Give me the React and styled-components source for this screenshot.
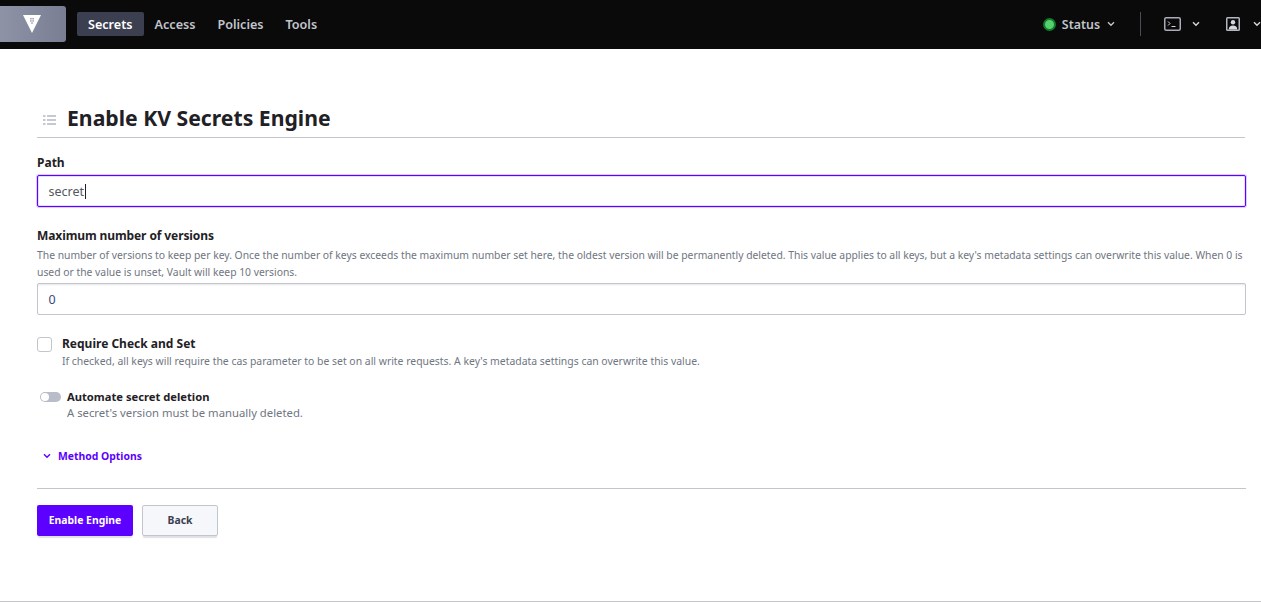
import React from 'react';
import styled, { createGlobalStyle } from 'styled-components';

const GlobalStyle = createGlobalStyle`
  html, body {
    margin: 0;
    padding: 0;
    background: #fff;
    overflow: hidden;
    font-family: "Noto Sans", "Open Sans", sans-serif;
  }
  * { box-sizing: border-box; }
`;

const App = () => {
  return (
    <Page>
      <GlobalStyle />
      <NavBar>
        <NavLeft>
          <Logo>
            <svg width="20" height="18" viewBox="0 0 20 18">
              <path d="M1 0h18L10 18z" fill="#fff" />
              <g fill="#8a8fa3">
                <rect x="8.2" y="3" width="1.4" height="1.4" />
                <rect x="10.4" y="3" width="1.4" height="1.4" />
                <rect x="8.2" y="5.2" width="1.4" height="1.4" />
                <rect x="10.4" y="5.2" width="1.4" height="1.4" />
                <rect x="9.3" y="7.4" width="1.4" height="1.4" />
              </g>
            </svg>
          </Logo>
          <NavLinks>
            <NavLink $active>Secrets</NavLink>
            <NavLink>Access</NavLink>
            <NavLink>Policies</NavLink>
            <NavLink>Tools</NavLink>
          </NavLinks>
        </NavLeft>
        <NavRight>
          <StatusDot />
          <StatusText>Status</StatusText>
          <Chevron color="#c2c5cb" />
          <Divider />
          <ConsoleIcon>
            <svg width="17" height="14" viewBox="0 0 17 14" fill="none">
              <rect x="0.75" y="0.75" width="15.5" height="12.5" rx="1.5" stroke="#a9adb8" strokeWidth="1.5" />
              <path d="M4 4.5L6 6.5L4 8.5" stroke="#d5d7dc" strokeWidth="1" />
              <path d="M7.5 9.5H11.5" stroke="#d5d7dc" strokeWidth="1" />
            </svg>
          </ConsoleIcon>
          <Chevron color="#d5d7dc" />
          <UserIcon>
            <svg width="14" height="14" viewBox="0 0 14 14">
              <rect width="14" height="14" rx="1.5" fill="#b4b7c2" />
              <rect x="1.5" y="1.5" width="11" height="11" fill="#0a0a0a" />
              <circle cx="7" cy="5.2" r="2.2" fill="#d5d7dc" />
              <path d="M2.8 12.5c0-3 1.6-4 4.2-4s4.2 1 4.2 4z" fill="#d5d7dc" />
            </svg>
          </UserIcon>
          <Chevron color="#d5d7dc" />
        </NavRight>
      </NavBar>

      <Content>
        <Header>
          <ListIcon>
            <svg width="13" height="10" viewBox="0 0 13 10" fill="#c6c8d3">
              <rect x="0" y="0" width="2.5" height="2" />
              <rect x="4" y="0" width="9" height="2" />
              <rect x="0" y="4" width="2.5" height="2" />
              <rect x="4" y="4" width="9" height="2" />
              <rect x="0" y="8" width="2.5" height="2" />
              <rect x="4" y="8" width="9" height="2" />
            </svg>
          </ListIcon>
          <Title>Enable KV Secrets Engine</Title>
        </Header>

        <Field $top={16}>
          <Label>Path</Label>
          <InputBox $focused>
            secret<Caret />
          </InputBox>
        </Field>

        <Field $top={20}>
          <Label $tight>Maximum number of versions</Label>
          <Help $size={10.35} $top={2}>
            The number of versions to keep per key. Once the number of keys exceeds the maximum number set here, the oldest version will be permanently deleted. This value applies to all keys, but a key's metadata settings can overwrite this value. When 0 is used or the value is unset, Vault will keep 10 versions.
          </Help>
          <InputBox $value>0</InputBox>
        </Field>

        <CheckRow>
          <CheckBox />
          <div>
            <Label>Require Check and Set</Label>
            <Help $size={10.42} $top={0}>If checked, all keys will require the cas parameter to be set on all write requests. A key's metadata settings can overwrite this value.</Help>
          </div>
        </CheckRow>

        <ToggleRow>
          <Toggle />
          <div>
            <SmallLabel>Automate secret deletion</SmallLabel>
            <ToggleHelp>A secret's version must be manually deleted.</ToggleHelp>
          </div>
        </ToggleRow>

        <MethodOptions>
          <Chevron color="#5c00ff" />
          Method Options
        </MethodOptions>

        <Footer>
          <PrimaryButton>Enable Engine</PrimaryButton>
          <SecondaryButton>Back</SecondaryButton>
        </Footer>
      </Content>
      <BottomRule />
    </Page>
  );
};

const Chevron = ({ color }) => (
  <ChevronSvg width="8" height="6" viewBox="0 0 8 6" fill="none">
    <path d="M1 1.2L4 4.2L7 1.2" stroke={color} strokeWidth="1.4" />
  </ChevronSvg>
);

// Styled components
const Page = styled.div`
  position: relative;
  height: 605px;
  width: 1261px;
  overflow: hidden;
  color: #1f2126;
`;

const NavBar = styled.div`
  display: flex;
  justify-content: space-between;
  align-items: center;
  height: 49px;
  padding-bottom: 1px;
  background: #0a0a0b;
`;

const NavLeft = styled.div`
  display: flex;
  align-items: center;
`;

const Logo = styled.div`
  display: flex;
  align-items: center;
  justify-content: flex-end;
  width: 66px;
  height: 36px;
  padding-right: 24px;
  background: linear-gradient(90deg, #8f93a6, #7a7e93);
  border-radius: 0 3px 3px 0;
`;

const NavLinks = styled.div`
  display: flex;
  align-items: center;
  margin-left: 11px;
`;

const NavLink = styled.div`
  height: 24px;
  padding: 1px 11px 0;
  line-height: 24px;
  border-radius: 2px;
  font-size: 12.6px;
  font-weight: 600;
  color: ${(p) => (p.$active ? '#ffffff' : '#c2c5cb')};
  background: ${(p) => (p.$active ? '#3b3f4f' : 'transparent')};
`;

const NavRight = styled.div`
  display: flex;
  align-items: center;
`;

const StatusDot = styled.div`
  width: 13px;
  height: 13px;
  border-radius: 50%;
  background: #56d06e;
  border: 2px solid #0f7a2a;
`;

const StatusText = styled.div`
  margin-left: 6px;
  font-size: 12.4px;
  font-weight: 600;
  color: #c2c5cb;
`;

const ChevronSvg = styled.svg`
  flex: none;
  margin-left: 7px;
`;

const Divider = styled.div`
  width: 1px;
  height: 24px;
  margin: 0 23px 0 25px;
  background: #4a4d59;
`;

const ConsoleIcon = styled.div`
  display: flex;
  margin-right: 4px;
`;

const UserIcon = styled.div`
  display: flex;
  margin-left: 26px;
  margin-right: 6px;
`;

const Content = styled.div`
  padding: 51px 15px 0 37px;
`;

const Header = styled.div`
  display: flex;
  align-items: center;
  height: 38px;
  padding-bottom: 2px;
  margin-right: 1px;
  border-bottom: 1px solid #c2c5cb;
`;

const ListIcon = styled.div`
  display: flex;
  margin: 4px 11px 0 6px;
`;

const Title = styled.h1`
  margin: 0;
  font-size: 21.2px;
  font-weight: 700;
  color: #1f2126;
`;

const Field = styled.div`
  margin-top: ${(p) => p.$top}px;
`;

const Label = styled.div`
  font-size: 12px;
  line-height: 18px;
  font-weight: 700;
  letter-spacing: ${(p) => (p.$tight ? '-0.1px' : '0')};
  color: #1f2126;
`;

const Help = styled.div`
  margin-top: ${(p) => p.$top}px;
  font-size: ${(p) => p.$size}px;
  line-height: 17px;
  color: #6f7682;
`;

const InputBox = styled.div`
  display: flex;
  align-items: center;
  height: 32px;
  margin-top: ${(p) => (p.$focused ? '3px' : '2px')};
  padding: 0 10.5px;
  font-size: 12.5px;
  background: #fff;
  border-radius: 2px;
  color: ${(p) => (p.$value ? '#3c4a7a' : '#525761')};
  border: 1px solid ${(p) => (p.$focused ? '#5c00ff' : '#c2c5cb')};
  box-shadow: ${(p) => (p.$focused ? '0 0 0 1px #d9ceff, inset 0 0 0 1px #5c00ff22' : 'inset 0 2px 2px -1px #e6e7ea')};
`;

const Caret = styled.span`
  display: inline-block;
  width: 1px;
  height: 15px;
  margin-left: 1px;
  background: #1f2126;
`;

const CheckRow = styled.div`
  display: flex;
  margin-top: 20px;
`;

const CheckBox = styled.div`
  flex: none;
  width: 15px;
  height: 15px;
  margin: 2px 10px 0 0;
  border: 1px solid #c2c5cb;
  border-radius: 3px;
`;

const ToggleRow = styled.div`
  display: flex;
  margin-top: 19px;
  padding-left: 3px;
`;

const Toggle = styled.div`
  position: relative;
  flex: none;
  width: 21px;
  height: 10px;
  margin: 3px 6px 0 0;
  background: #b9bcc9;
  border-radius: 5px;
  &::after {
    content: '';
    position: absolute;
    left: 1px;
    top: 1px;
    width: 8px;
    height: 8px;
    border-radius: 50%;
    background: #fff;
  }
`;

const SmallLabel = styled.div`
  font-size: 11.2px;
  line-height: 16px;
  font-weight: 700;
  color: #1f2126;
`;

const ToggleHelp = styled.div`
  font-size: 11.3px;
  line-height: 16px;
  color: #6f7682;
`;

const MethodOptions = styled.div`
  display: flex;
  align-items: center;
  gap: 7px;
  margin-top: 27px;
  font-size: 10.4px;
  line-height: 16px;
  font-weight: 700;
  color: #5c00ff;

  svg {
    margin-left: 6px;
  }
`;

const Footer = styled.div`
  display: flex;
  gap: 9px;
  margin-top: 24px;
  padding-top: 16px;
  border-top: 1px solid #c2c5cb;
`;

const BaseButton = styled.div`
  display: flex;
  align-items: center;
  justify-content: center;
  height: 31px;
  padding-bottom: 2px;
  border-radius: 2px;
  font-size: 10.4px;
  font-weight: 700;
  box-shadow: 0 3px 1px -1px #e1e2e6;
`;

const PrimaryButton = styled(BaseButton)`
  width: 96px;
  color: #fff;
  background: #5c00ff;
`;

const SecondaryButton = styled(BaseButton)`
  width: 76px;
  color: #3b3f4f;
  background: #f6f7fa;
  border: 1px solid #c2c5cb;
`;

const BottomRule = styled.div`
  position: absolute;
  left: 0;
  right: 0;
  top: 601px;
  height: 1px;
  background: #c2c5cb;
`;

export default App;
